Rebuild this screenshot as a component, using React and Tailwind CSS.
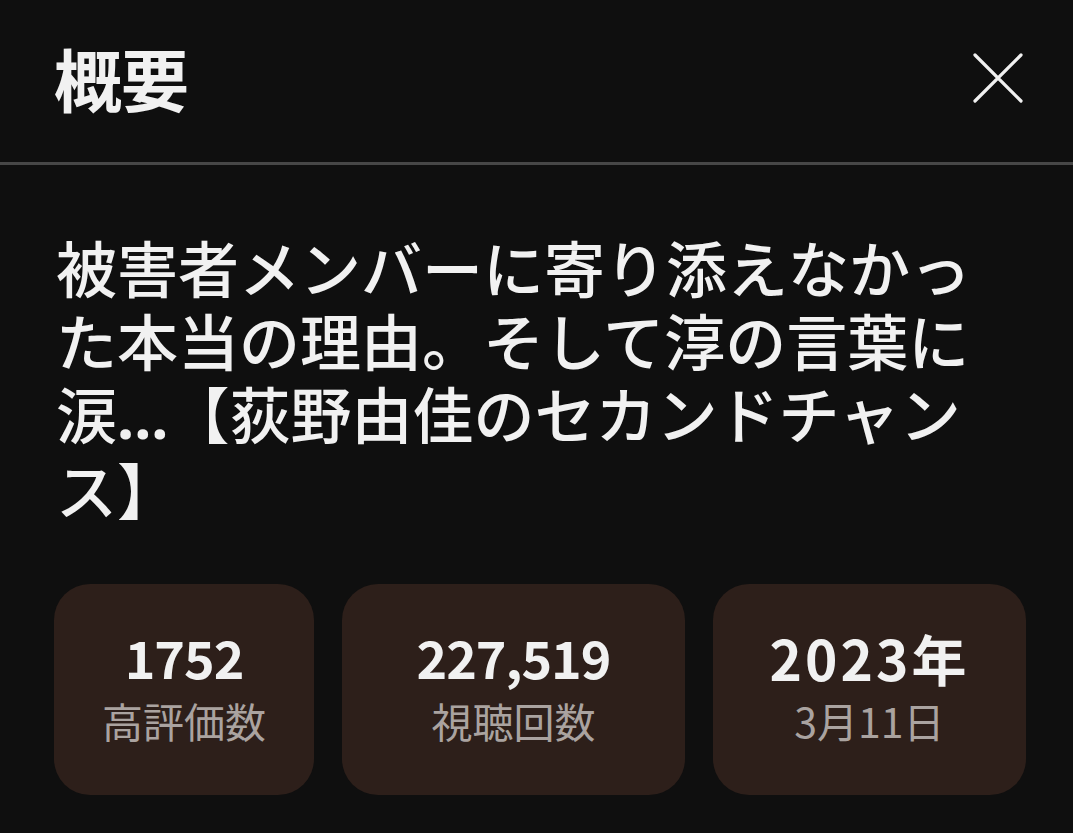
import React from "react";

const font = { fontFamily: '"Noto Sans CJK JP", "Noto Sans", sans-serif' };

function Card({ w, big, small, bigCls }) {
  return (
    <div className={`${w} h-[211px] shrink-0 rounded-[36px] bg-[#2d1f1a] flex flex-col items-center justify-center`}>
      <div className={`text-[52px] font-bold leading-[60px] text-[#f1f1f1] mt-[-8px] ${bigCls}`}>{big}</div>
      <div className="text-[41px] leading-[50px] text-[#aaa3a0] mt-[8px]">{small}</div>
    </div>
  );
}

export default function App() {
  return (
    <div className="w-[1073px] h-[833px] bg-[#0f0f0f] overflow-hidden" style={font}>
      <div className="h-[162px] flex items-center justify-between pl-[54px] pr-[50px] pb-[6px]">
        <div className="text-[68px] font-bold leading-none text-[#f1f1f1] tracking-[-1px]">概要</div>
        <svg width="50" height="50" viewBox="0 0 50 50">
          <path d="M2 2 L48 48 M48 2 L2 48" stroke="#f1f1f1" strokeWidth="3.2" strokeLinecap="round" />
        </svg>
      </div>
      <div className="h-[3px] bg-[#474747]" />
      <div className="px-[56px] pt-[65px]">
        <div className="w-[940px] text-[61px] leading-[73px] font-medium text-[#f1f1f1]">
          被害者メンバーに寄り添えなかった本当の理由。そして淳の言葉に涙
          <span style={{ fontFamily: '"Noto Sans", sans-serif' }} className="font-bold">...</span>
          【荻野由佳のセカンドチャンス】
        </div>
      </div>
      <div className="flex gap-[28px] pl-[54px] mt-[59px]">
        <Card w="w-[260px]" big="1752" small="高評価数" bigCls="tracking-[-1px]" />
        <Card w="w-[343px]" big="227,519" small="視聴回数" bigCls="tracking-[-1px]" />
        <Card w="w-[313px]" big="2023年" small="3月11日" bigCls="text-[55px] tracking-[3px]" />
      </div>
    </div>
  );
}
